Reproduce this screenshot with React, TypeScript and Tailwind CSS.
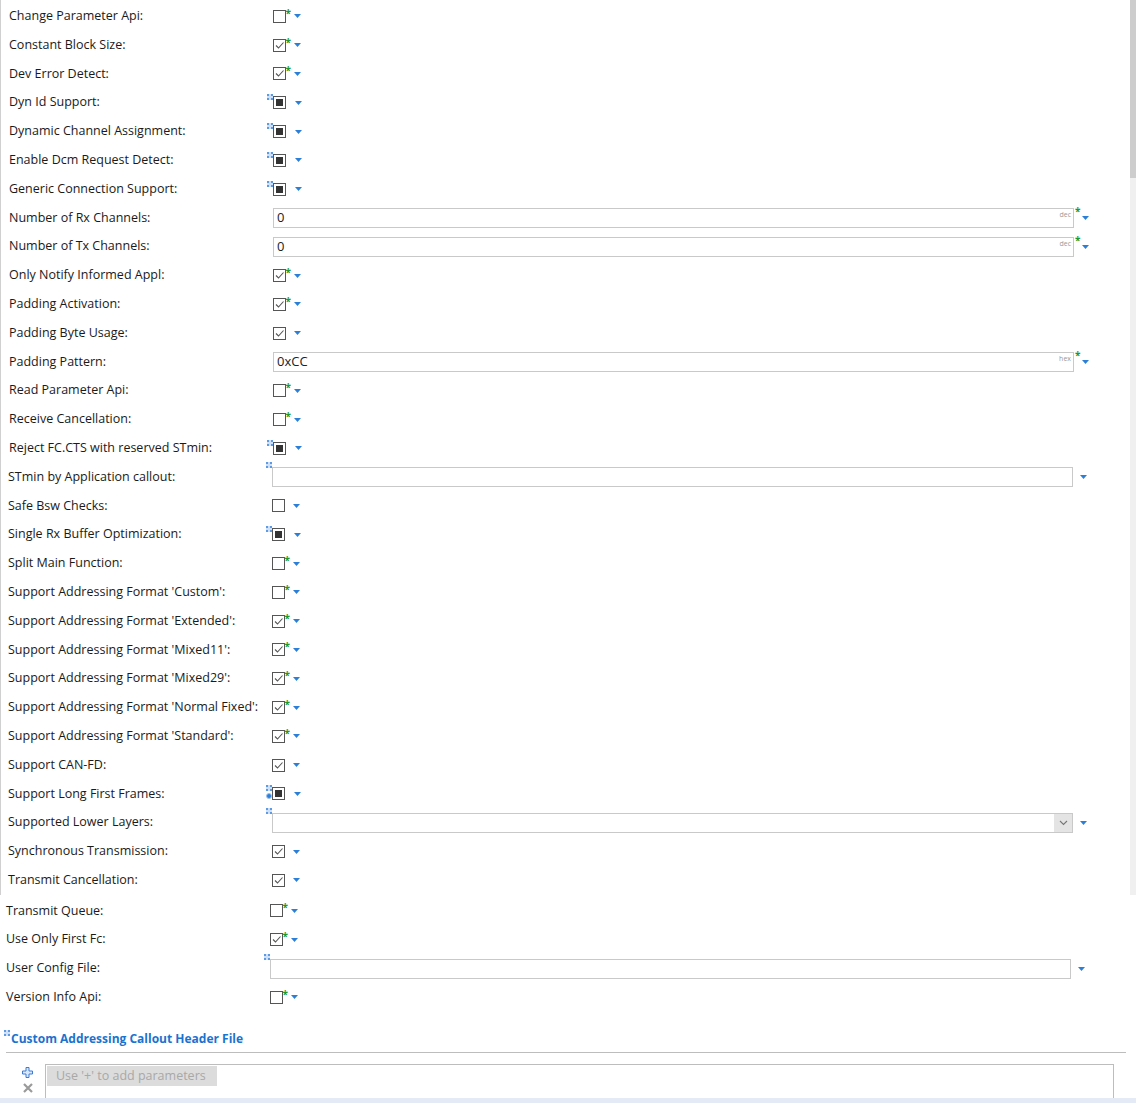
import { ReactNode } from "react";

type Row =
  | { label: string; kind: "check"; checked: boolean; star: boolean; shift?: number }
  | { label: string; kind: "ind"; extra?: boolean; shift?: number }
  | { label: string; kind: "text"; value: string; unit: string; shift?: number }
  | { label: string; kind: "empty"; combo?: boolean; shift?: number };

const mainRows: Row[] = [
  { label: "Change Parameter Api:", kind: "check", checked: false, star: true, shift: 1 },
  { label: "Constant Block Size:", kind: "check", checked: true, star: true, shift: 1 },
  { label: "Dev Error Detect:", kind: "check", checked: true, star: true, shift: 1 },
  { label: "Dyn Id Support:", kind: "ind", shift: 1 },
  { label: "Dynamic Channel Assignment:", kind: "ind", shift: 1 },
  { label: "Enable Dcm Request Detect:", kind: "ind", shift: 1 },
  { label: "Generic Connection Support:", kind: "ind", shift: 1 },
  { label: "Number of Rx Channels:", kind: "text", value: "0", unit: "dec", shift: 1 },
  { label: "Number of Tx Channels:", kind: "text", value: "0", unit: "dec", shift: 1 },
  { label: "Only Notify Informed Appl:", kind: "check", checked: true, star: true, shift: 1 },
  { label: "Padding Activation:", kind: "check", checked: true, star: true, shift: 1 },
  { label: "Padding Byte Usage:", kind: "check", checked: true, star: false, shift: 1 },
  { label: "Padding Pattern:", kind: "text", value: "0xCC", unit: "hex", shift: 1 },
  { label: "Read Parameter Api:", kind: "check", checked: false, star: true, shift: 1 },
  { label: "Receive Cancellation:", kind: "check", checked: false, star: true, shift: 1 },
  { label: "Reject FC.CTS with reserved STmin:", kind: "ind", shift: 1 },
  { label: "STmin by Application callout:", kind: "empty" },
  { label: "Safe Bsw Checks:", kind: "check", checked: false, star: false },
  { label: "Single Rx Buffer Optimization:", kind: "ind" },
  { label: "Split Main Function:", kind: "check", checked: false, star: true },
  { label: "Support Addressing Format 'Custom':", kind: "check", checked: false, star: true },
  { label: "Support Addressing Format 'Extended':", kind: "check", checked: true, star: true },
  { label: "Support Addressing Format 'Mixed11':", kind: "check", checked: true, star: true },
  { label: "Support Addressing Format 'Mixed29':", kind: "check", checked: true, star: true },
  { label: "Support Addressing Format 'Normal Fixed':", kind: "check", checked: true, star: true },
  { label: "Support Addressing Format 'Standard':", kind: "check", checked: true, star: true },
  { label: "Support CAN-FD:", kind: "check", checked: true, star: false },
  { label: "Support Long First Frames:", kind: "ind", extra: true },
  { label: "Supported Lower Layers:", kind: "empty", combo: true },
  { label: "Synchronous Transmission:", kind: "check", checked: true, star: false },
  { label: "Transmit Cancellation:", kind: "check", checked: true, star: false },
];

const lowerRows: Row[] = [
  { label: "Transmit Queue:", kind: "check", checked: false, star: true },
  { label: "Use Only First Fc:", kind: "check", checked: true, star: true },
  { label: "User Config File:", kind: "empty" },
  { label: "Version Info Api:", kind: "check", checked: false, star: true },
];

const Star = () => (
  <span className="absolute -top-[3px] -right-[6px] text-[10px] leading-none font-bold text-[#1f9a2a]">*</span>
);

const DropArrow = () => (
  <svg width="7" height="4" viewBox="0 0 7 4" className="shrink-0">
    <path d="M0 0h7L3.5 4z" fill="#2b7fd8" />
  </svg>
);

const LinkIcon = ({ className }: { className: string }) => (
  <svg width="6" height="6" viewBox="0 0 6 6" className={`absolute ${className}`}>
    <rect x="0" y="0" width="6" height="6" fill="#cfe0f7" />
    <path d="M0 0h2v2H0zM4 0h2v2H4zM0 4h2v2H0zM4 4h2v2H4z" fill="#5b9be6" />
  </svg>
);

const CheckBox = ({ checked, star }: { checked: boolean; star: boolean }) => (
  <div className="flex items-center gap-[8px]">
    <div className="relative w-[13px] h-[13px] border border-[#555] bg-white">
      {checked && (
        <svg width="11" height="11" viewBox="0 0 11 11" className="absolute top-0 left-0">
          <path d="M2 5.5l2.5 2.5L9.5 2.5" stroke="#555" strokeWidth="1.1" fill="none" />
        </svg>
      )}
      {star && <Star />}
    </div>
    <DropArrow />
  </div>
);

const IndBox = ({ extra }: { extra?: boolean }) => (
  <div className="flex items-center gap-[9px]">
    <div className="relative w-[13px] h-[13px] border border-[#555] bg-white flex items-center justify-center">
      <div className="w-[7px] h-[7px] bg-[#333]" />
      <LinkIcon className="-left-[7px] -top-[3px]" />
      {extra && (
        <span className="absolute -left-[7px] top-[5px] w-[6px] h-[6px] rounded-full bg-[#2b7fd8] border border-[#9cc2ee]" />
      )}
    </div>
    <DropArrow />
  </div>
);

const Field = ({ children, icon }: { children?: ReactNode; icon?: boolean }) => (
  <div className="relative flex-1 h-[20px] border border-[#c9c9c9] bg-white flex items-center">
    {children}
    {icon && <LinkIcon className="-left-[7px] -top-[6px]" />}
  </div>
);

const Control = ({ row }: { row: Row }) => {
  if (row.kind === "check") return <CheckBox checked={row.checked} star={row.star} />;
  if (row.kind === "ind") return <IndBox extra={row.extra} />;
  if (row.kind === "text")
    return (
      <div className="flex items-center w-full pr-[41px]">
        <Field>
          <span className="pl-[3px] text-[13px] text-[#222]">{row.value}</span>
          <span className="ml-auto mr-[2px] -mt-[6px] text-[7px] text-[#999]">{row.unit}</span>
        </Field>
        <div className="relative w-[15px] h-[20px] flex items-center justify-end">
          <span className="absolute top-[-4px] left-[1px] text-[10px] font-bold text-[#1f9a2a]">*</span>
          <DropArrow />
        </div>
      </div>
    );
  return (
    <div className="flex items-center w-full pr-[43px]">
      <Field icon>
        {row.combo && (
          <div className="ml-auto h-full w-[18px] bg-[#e4e4e4] flex items-center justify-center">
            <svg width="9" height="6" viewBox="0 0 9 6">
              <path d="M1 1l3.5 3.5L8 1" stroke="#777" strokeWidth="1.1" fill="none" />
            </svg>
          </div>
        )}
      </Field>
      <div className="w-[14px] flex justify-end">
        <DropArrow />
      </div>
    </div>
  );
};

const FormRow = ({ row, left }: { row: Row; left: number }) => {
  const pad = left + (row.shift ?? 0);
  const labelCls =
    pad === 9 ? "w-[272px] pl-[8px]" : pad === 8 ? "w-[271px] pl-[7px]" : "w-[270px] pl-[6px]";
  return (
    <div className="h-[28.8px] flex items-center">
      <div className={`${labelCls} shrink-0 text-[12.5px] text-[#1a1a1a] whitespace-nowrap`}>
        {row.label}
      </div>
      <div className="flex-1 flex items-center">
        <Control row={row} />
      </div>
    </div>
  );
};

export default function App() {
  return (
    <div
      className="w-[1136px] h-[1103px] bg-white overflow-hidden flex flex-col"
      style={{ fontFamily: "'Open Sans', 'Noto Sans', sans-serif" }}
    >
      <div className="flex h-[895px]">
        <div className="flex-1 pt-[2px] border-l border-[#d0d0d0]">
          {mainRows.map((r) => (
            <FormRow key={r.label} row={r} left={8} />
          ))}
        </div>
        <div className="w-[6px] flex flex-col bg-[#f0f0f0]">
          <div className="h-[178px] bg-[#cdcdcd]" />
        </div>
      </div>
      <div className="pt-[1.6px] pr-[8px]">
        {lowerRows.map((r) => (
          <FormRow key={r.label} row={r} left={6} />
        ))}
      </div>
      <div className="relative mt-[15px] pl-[11px] h-[24px] flex items-center">
        <LinkIcon className="left-[4px] top-[3px]" />
        <span className="text-[12px] font-bold text-[#1a73cf]">Custom Addressing Callout Header File</span>
      </div>
      <div className="ml-[6px] mr-[10px] mt-[1px] border-t border-[#bdbdbd]" />
      <div className="flex flex-1 mt-[11px]">
        <div className="w-[45px] flex flex-col items-end pr-[12px] pt-[3px] gap-[5px]">
          <svg width="11" height="11" viewBox="0 0 11 11">
            <path d="M4 0.5h3v3.5h3.5v3H7v3.5H4V7H0.5V4H4z" fill="#dbe8fb" stroke="#3a7bd5" strokeWidth="1" />
          </svg>
          <svg width="10" height="10" viewBox="0 0 10 10">
            <path d="M1 1l8 8M9 1l-8 8" stroke="#9a9a9a" strokeWidth="2.2" />
          </svg>
        </div>
        <div className="w-[1069px] border-l border-t border-r border-[#bdbdbd] pl-[1px] pt-[1px]">
          <div className="w-[170px] h-[20px] bg-[#dcdcdc] pl-[9px] text-[12.5px] text-[#a8a8a8] leading-[20px]">
            Use '+' to add parameters
          </div>
        </div>
      </div>
      <div className="h-[5px] bg-[#e4ebf6]" />
    </div>
  );
}
